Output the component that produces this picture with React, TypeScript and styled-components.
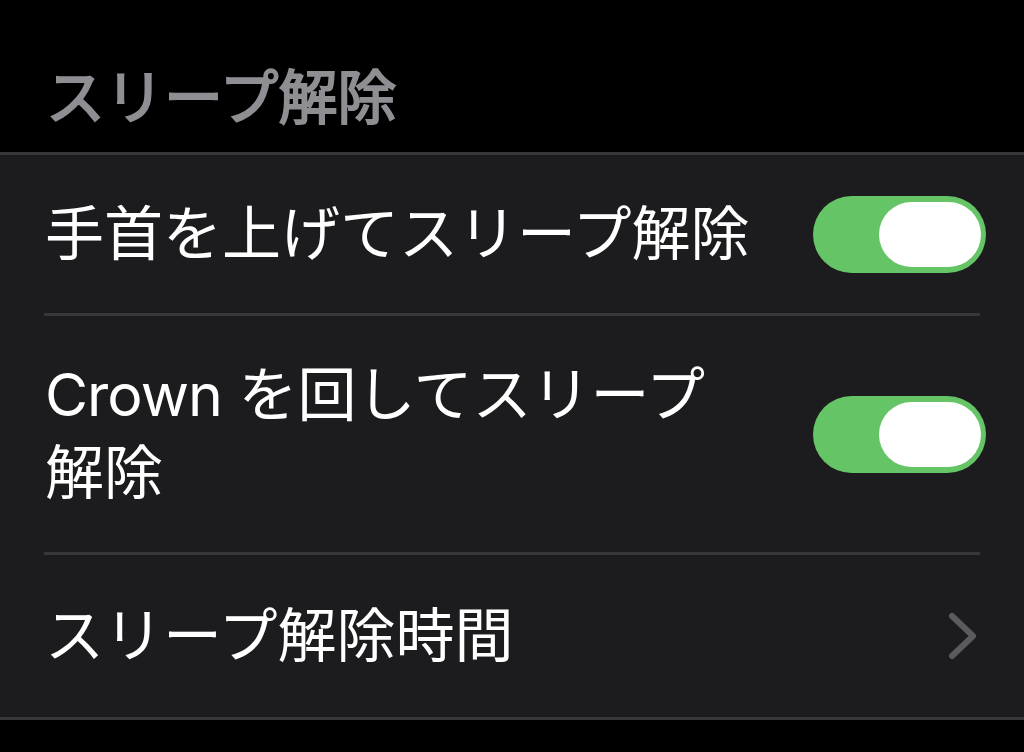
import React from 'react';
import styled, { createGlobalStyle } from 'styled-components';

interface ISettingRow {
  label: React.ReactNode;
  kind: 'toggle' | 'link';
  on?: boolean;
}

const App = () => {
  const rows: ISettingRow[] = [
    { label: '手首を上げてスリープ解除', kind: 'toggle', on: true },
    { label: <><Latin>Crown</Latin> を回してスリープ<br />解除</>, kind: 'toggle', on: true },
    { label: 'スリープ解除時間', kind: 'link' },
  ];

  return (
    <>
      <GlobalStyle />
      <Page>
        <SectionTitle>スリープ解除</SectionTitle>
        <Group>
          {rows.map((row, index) => (
            <Row key={index} $last={index === rows.length - 1}>
              <Label>{row.label}</Label>
              {row.kind === 'toggle' ? (
                <Toggle $on={!!row.on}>
                  <Knob />
                </Toggle>
              ) : (
                <Chevron width="30" height="48" viewBox="0 0 30 48">
                  <polyline points="4,4 25,24 4,44" />
                </Chevron>
              )}
            </Row>
          ))}
        </Group>
      </Page>
    </>
  );
};

const GlobalStyle = createGlobalStyle`
  html, body {
    margin: 0;
    padding: 0;
    background: #000;
  }
  body {
    font-family: Inter, "Noto Sans CJK JP", sans-serif;
  }
`;

const Page = styled.div`
  width: 1024px;
  height: 752px;
  background: #000;
  overflow: hidden;
`;

// semibold look: regular weight thickened a little
const SectionTitle = styled.div`
  height: 152px;
  box-sizing: border-box;
  padding: 56px 0 0 46px;
  font-size: 59px;
  line-height: 76px;
  font-weight: 400;
  color: #8e8e93;
  -webkit-text-stroke: 2px #8e8e93;
  font-family: "Noto Sans CJK JP", sans-serif;
`;

const Group = styled.div`
  background: #1c1c1e;
  border-top: 3px solid #38383a;
  border-bottom: 3px solid #38383a;
  padding-left: 44px;
`;

const Row = styled.div<{ $last: boolean }>`
  display: flex;
  align-items: center;
  justify-content: space-between;
  min-height: ${({ $last }) => ($last ? '162px' : '159px')};
  box-sizing: border-box;
  padding: 40px 0 40px 1px;
  border-bottom: ${({ $last }) => ($last ? 'none' : '3px solid #38383a')};
  margin-right: ${({ $last }) => ($last ? '0' : '44px')};
  padding-right: ${({ $last }) => ($last ? '46px' : '0')};
`;

const Label = styled.div`
  font-size: 59px;
  line-height: 78px;
  color: #fff;
  font-weight: 400;
`;

const Latin = styled.span`
  letter-spacing: -1px;
`;

const Toggle = styled.div<{ $on: boolean }>`
  width: 173px;
  height: 77px;
  border-radius: 39px;
  background: ${({ $on }) => ($on ? '#65c466' : '#39393d')};
  display: flex;
  align-items: center;
  justify-content: ${({ $on }) => ($on ? 'flex-end' : 'flex-start')};
  padding: 0 5px;
  box-sizing: border-box;
  margin-right: -6px;
  flex-shrink: 0;
`;

const Knob = styled.div`
  width: 102px;
  height: 65px;
  border-radius: 33px;
  background: #fff;
`;

const Chevron = styled.svg`
  fill: none;
  stroke: #5b5b5f;
  stroke-width: 6;
  stroke-linecap: round;
  stroke-linejoin: round;
  flex-shrink: 0;
`;

export default App;
